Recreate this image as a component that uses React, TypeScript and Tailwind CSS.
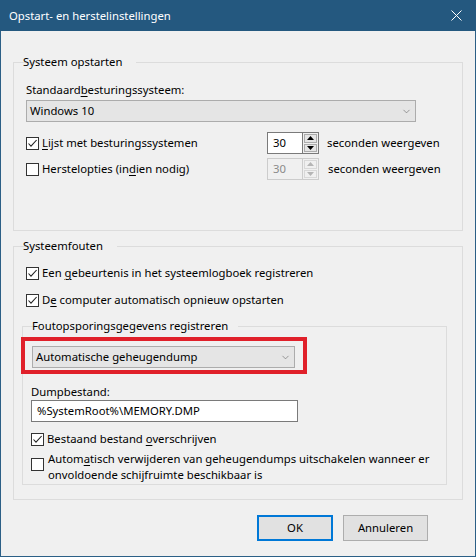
import { ChevronDown } from 'lucide-react'

const font = { fontFamily: '"Noto Sans", "Segoe UI", sans-serif' }

function Check({ checked }: { checked?: boolean }) {
  return (
    <span className="w-[13px] h-[13px] border border-[#333333] bg-white flex items-center justify-center shrink-0">
      {checked && (
        <svg width="11" height="11" viewBox="0 0 11 11">
          <path d="M1.5 5.5 L4 8.2 L9.6 2" fill="none" stroke="#222" strokeWidth="1.1" />
        </svg>
      )}
    </span>
  )
}

function U({ children }: { children: React.ReactNode }) {
  return <span className="underline underline-offset-2">{children}</span>
}

function Spinner({ disabled }: { disabled?: boolean }) {
  const arrow = disabled ? '#b5b5b5' : '#000'
  return (
    <div className="flex h-[22px]">
      <div
        className={`w-[36px] h-full flex items-center pl-[5px] border ${
          disabled ? 'border-[#cccccc] text-[#8a8a8a] bg-[#f0f0f0]' : 'border-[#7a7a7a] bg-white'
        }`}
      >
        30
      </div>
      <div className={`w-[16px] h-full flex flex-col border border-l-0 ${disabled ? 'border-[#cccccc]' : 'border-[#7a7a7a]'} p-[1px] gap-[1px]`}>
        <div className={`flex-1 flex items-center justify-center border ${disabled ? 'border-[#d8d8d8] bg-[#f0f0f0]' : 'border-[#acacac] bg-[#e5e5e5]'}`}>
          <svg width="7" height="4" viewBox="0 0 7 4"><path d="M0 4 L3.5 0 L7 4 Z" fill={arrow} /></svg>
        </div>
        <div className={`flex-1 flex items-center justify-center border ${disabled ? 'border-[#d8d8d8] bg-[#f0f0f0]' : 'border-[#acacac] bg-[#e5e5e5]'}`}>
          <svg width="7" height="4" viewBox="0 0 7 4"><path d="M0 0 L3.5 4 L7 0 Z" fill={arrow} /></svg>
        </div>
      </div>
    </div>
  )
}

function Select({ value, width }: { value: string; width: string }) {
  return (
    <div className={`${width} h-[22px] bg-[#e5e5e5] border border-[#acacac] flex items-center justify-between pl-[3px] pr-[3px]`}>
      <span>{value}</span>
      <ChevronDown className="w-[11px] h-[11px] text-[#606060]" strokeWidth={1.3} />
    </div>
  )
}

export default function App() {
  return (
    <div style={font} className="w-[476px] h-[557px] bg-[#f0f0f0] text-[11.3px] leading-[16px] text-black border-x border-b border-[#2b5f86] flex flex-col">
      {/* titelbalk */}
      <div className="h-[31px] -mx-px bg-[#24587f] text-white flex items-center justify-between pl-[9px] pr-[9px] shrink-0">
        <span className="text-[11.3px]">Opstart- en herstelinstellingen</span>
        <svg width="11" height="11" viewBox="0 0 11 11" className="mr-[5px]">
          <path d="M0.5 0.5 L10.5 10.5 M10.5 0.5 L0.5 10.5" stroke="white" strokeWidth="1" />
        </svg>
      </div>

      <div className="pl-[12px] pr-[12px]">
        {/* Systeem opstarten */}
        <fieldset className="mt-[23px] w-[450px] h-[177px] border border-[#dcdcdc] pl-[12px]">
          <legend className="ml-[7px] px-[2px] -translate-x-[12px]">Systeem opstarten</legend>
          <div className="mt-[12px]">
            Standaard<U>b</U>esturingssysteem:
          </div>
          <div className="mt-[2px]">
            <Select value="Windows 10" width="w-[390px]" />
          </div>
          <div className="mt-[10px] flex items-center h-[22px]">
            <div className="w-[241px] flex items-center gap-[3px]">
              <Check checked />
              <span><U>L</U>ijst met besturingssystemen</span>
            </div>
            <Spinner />
            <span className="ml-[8px]">seconden weergeven</span>
          </div>
          <div className="mt-[4px] flex items-center h-[22px]">
            <div className="w-[241px] flex items-center gap-[3px]">
              <Check />
              <span>Herstelopties (in<U>d</U>ien nodig)</span>
            </div>
            <Spinner disabled />
            <span className="ml-[9px]">seconden weergeven</span>
          </div>
        </fieldset>

        {/* Systeemfouten */}
        <fieldset className="mt-[7px] w-[450px] h-[262px] border border-[#dcdcdc] pl-[12px]">
          <legend className="ml-[7px] px-[2px] -translate-x-[12px]">Systeemfouten</legend>
          <div className="mt-[9px] h-[20px] flex items-center gap-[3px]">
            <Check checked />
            <span>Een <U>g</U>ebeurtenis in het systeemlogboek registreren</span>
          </div>
          <div className="mt-[7px] h-[20px] flex items-center gap-[3px]">
            <Check checked />
            <span>D<U>e</U> computer automatisch opnieuw opstarten</span>
          </div>

          <fieldset className="mt-[8px] -ml-[4px] w-[425px] h-[167px] border border-[#dcdcdc] pl-[8px]">
            <legend className="ml-[7px] px-[2px] -translate-x-[8px]">Foutopsporingsgegevens registreren</legend>
            <div className="mt-[12px] ml-[1px] relative w-[263px]">
              <Select value="Automatische geheugendump" width="w-[263px]" />
              <div className="absolute -left-[11px] -right-[12px] -top-[9px] -bottom-[6px] border-4 border-[#e0202a] pointer-events-none" />
            </div>
            <div className="mt-[16px]">Dumpbestand:</div>
            <div className="w-[267px] h-[22px] bg-white border border-[#7a7a7a] flex items-center pl-[5px]">
              %SystemRoot%\MEMORY.DMP
            </div>
            <div className="mt-[7px] h-[20px] flex items-center gap-[3px]">
              <Check checked />
              <span>Bestaand bestand <U>o</U>verschrijven</span>
            </div>
            <div className="mt-[2px] flex items-start gap-[4px]">
              <div className="pt-[7px]"><Check /></div>
              <span className="leading-[16px] whitespace-nowrap">
                Autom<U>a</U>tisch verwijderen van geheugendumps uitschakelen wanneer er
                <br />
                onvoldoende schijfruimte beschikbaar is
              </span>
            </div>
          </fieldset>
        </fieldset>
      </div>

      <div className="mt-[15px] flex justify-end gap-[10px] pr-[47px]">
        <button className="w-[76px] h-[26px] bg-[#e1e1e1] border-2 border-[#0078d7]">OK</button>
        <button className="w-[85px] h-[26px] bg-[#e1e1e1] border border-[#adadad]">Annuleren</button>
      </div>
    </div>
  )
}
